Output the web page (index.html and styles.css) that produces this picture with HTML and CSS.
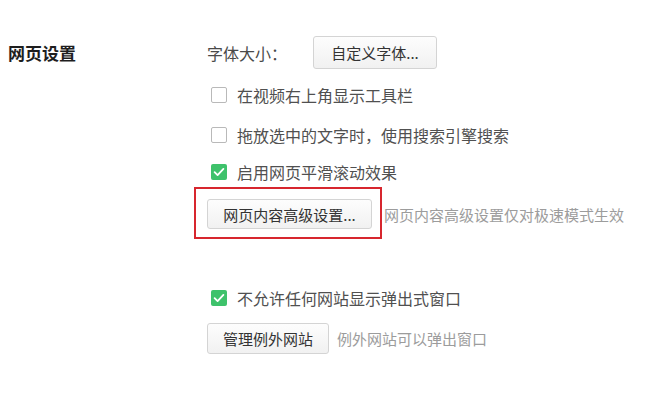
FILE: index.html
```html
<!DOCTYPE html>
<html lang="zh-CN">
<head>
<meta charset="utf-8">
<title>网页设置</title>
<link rel="stylesheet" href="styles.css">
</head>
<body>
<div class="settings">
  <div class="section-title">网页设置</div>
  <div class="section-body">
    <div class="font-row">
      <span class="label">字体大小：</span>
      <button class="btn btn-font">自定义字体...</button>
    </div>
    <label class="check-row cr1">
      <span class="box"></span>
      <span class="check-text">在视频右上角显示工具栏</span>
    </label>
    <label class="check-row cr2">
      <span class="box"></span>
      <span class="check-text">拖放选中的文字时，使用搜索引擎搜索</span>
    </label>
    <label class="check-row cr3">
      <span class="box checked"><svg viewBox="0 0 16 16" width="16" height="16"><polyline points="3.6,8.2 6.6,11.1 12.4,4.9" fill="none" stroke="#fff" stroke-width="1.8" stroke-linecap="round" stroke-linejoin="round"/></svg></span>
      <span class="check-text">启用网页平滑滚动效果</span>
    </label>
    <div class="adv-row">
      <span class="highlight">
        <button class="btn btn-adv">网页内容高级设置...</button>
      </span>
      <span class="hint hint-adv">网页内容高级设置仅对极速模式生效</span>
    </div>
    <label class="check-row cr4">
      <span class="box checked"><svg viewBox="0 0 16 16" width="16" height="16"><polyline points="3.6,8.2 6.6,11.1 12.4,4.9" fill="none" stroke="#fff" stroke-width="1.8" stroke-linecap="round" stroke-linejoin="round"/></svg></span>
      <span class="check-text">不允许任何网站显示弹出式窗口</span>
    </label>
    <div class="manage-row">
      <button class="btn btn-manage">管理例外网站</button>
      <span class="hint hint-manage">例外网站可以弹出窗口</span>
    </div>
  </div>
</div>
</body>
</html>
```

FILE: styles.css
```css
html, body {
  margin: 0;
  padding: 0;
  background: #ffffff;
}

body {
  font-family: "Noto Sans CJK SC", "Noto Sans", sans-serif;
  color: #333333;
  width: 659px;
  height: 404px;
  overflow: hidden;
}

.settings {
  display: grid;
  grid-template-columns: 207px 1fr;
  padding-top: 36px;
}

.section-title {
  padding-left: 8px;
  height: 33px;
  line-height: 33px;
  font-size: 17px;
  font-weight: bold;
  color: #1e1e1e;
}

.section-body {
  display: flex;
  flex-direction: column;
  align-items: flex-start;
}

.font-row {
  display: flex;
  align-items: center;
  height: 33px;
}

.label {
  font-size: 16px;
  color: #4a4a4a;
  width: 106px;
  line-height: 1;
}

.btn {
  font-family: "Noto Sans CJK SC", "Noto Sans", sans-serif;
  font-size: 15px;
  color: #333333;
  background: linear-gradient(#fdfdfd, #f1f1f1);
  border: 1px solid #d4d4d4;
  border-radius: 3px;
  box-sizing: border-box;
  line-height: 1;
  margin: 0;
  white-space: nowrap;
}

.btn-font {
  height: 33px;
  width: 124px;
  padding: 0;
}

.btn-adv {
  height: 30px;
  width: 165px;
  padding: 0;
}

.btn-manage {
  height: 31px;
  width: 122px;
  padding: 0;
}

.check-row {
  display: flex;
  align-items: center;
  padding-left: 4px;
}

.cr1 { margin-top: 6px; height: 40px; }
.cr2 { height: 40px; }
.cr3 { margin-top: 2px; height: 30px; }
.cr4 { margin-top: 44px; height: 30px; }

.box {
  width: 16px;
  height: 16px;
  box-sizing: border-box;
  border: 1px solid #b9b9b9;
  border-radius: 2px;
  background: #ffffff;
  margin-right: 10px;
  display: flex;
}

.box.checked {
  border: none;
  background: #3ec26b;
}

.check-text {
  font-size: 16px;
  color: #505050;
  line-height: 1;
}

.adv-row {
  display: flex;
  align-items: center;
  margin-left: -13px;
}

.highlight {
  display: flex;
  border: 2px solid #d7262e;
  padding: 10px 8px 8px 11px;
}

.hint {
  font-size: 15px;
  color: #9c9c9c;
  line-height: 1;
}

.hint-adv {
  margin-left: 2px;
  margin-top: 2px;
}

.manage-row {
  display: flex;
  align-items: center;
  margin-top: 10px;
}

.hint-manage {
  margin-left: 8px;
}
```
